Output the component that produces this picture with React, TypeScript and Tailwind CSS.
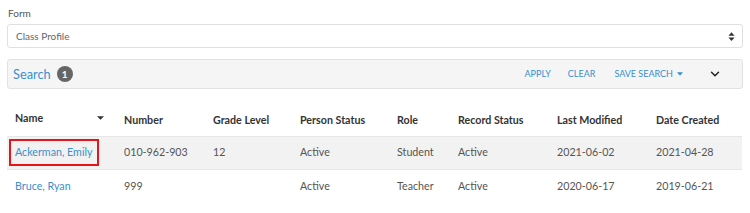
import { ChevronDown } from 'lucide-react';

const rows = [
  {
    name: 'Ackerman, Emily',
    number: '010-962-903',
    grade: '12',
    person: 'Active',
    role: 'Student',
    record: 'Active',
    modified: '2021-06-02',
    created: '2021-04-28',
  },
  {
    name: 'Bruce, Ryan',
    number: '999',
    grade: '',
    person: 'Active',
    role: 'Teacher',
    record: 'Active',
    modified: '2020-06-17',
    created: '2019-06-21',
  },
];

const cols = [
  { label: 'Name', w: 'w-[109px]' },
  { label: 'Number', w: 'w-[89px]' },
  { label: 'Grade Level', w: 'w-[87px]' },
  { label: 'Person Status', w: 'w-[97px]' },
  { label: 'Role', w: 'w-[61px]' },
  { label: 'Record Status', w: 'w-[99px]' },
  { label: 'Last Modified', w: 'w-[99px]' },
  { label: 'Date Created', w: 'w-[94px]' },
];

function SortArrows() {
  return (
    <svg width="7" height="11" viewBox="0 0 8 12" className="text-[#333]">
      <path d="M4 1 L7.5 5 H0.5 Z" fill="currentColor" />
      <path d="M4 11 L7.5 7 H0.5 Z" fill="currentColor" />
    </svg>
  );
}

export default function App() {
  return (
    <div className="w-[750px] h-[213px] overflow-hidden bg-white px-[7px] pt-[4px] font-['Lato',sans-serif] text-[10.7px] text-[#555]">
      <div className="pl-[1px] text-[10px] leading-[18px] text-[#555]">Form</div>
      <div className="mt-[2px] flex h-[24px] items-center justify-between rounded-[3px] border border-[#e0e0e0] bg-white pl-[8px] pr-[7px]">
        <span className="text-[10px] text-[#666]">Class Profile</span>
        <SortArrows />
      </div>

      <div className="mt-[11px] flex h-[30px] items-center rounded-[3px] border border-[#e2e2e2] bg-[#f5f5f5] pl-[5px] pr-[20px]">
        <span className="text-[12.8px] leading-none text-[#3a8fcc]">Search</span>
        <span className="ml-[6px] flex h-[16px] w-[16px] items-center justify-center rounded-full bg-[#666] text-[10px] font-bold leading-none text-white">
          1
        </span>
        <div className="ml-auto flex items-center text-[9px] text-[#3a8fcc]">
          <span>APPLY</span>
          <span className="ml-[17px]">CLEAR</span>
          <span className="ml-[19px] flex items-center">
            SAVE SEARCH
            <svg width="6" height="4" viewBox="0 0 7 4" className="ml-[4px]">
              <path d="M0 0 H7 L3.5 4 Z" fill="currentColor" />
            </svg>
          </span>
          <ChevronDown size={14} strokeWidth={2.5} className="ml-[25px] text-[#222]" />
        </div>
      </div>

      <table className="mt-[16px] w-[735px] table-fixed border-collapse whitespace-nowrap">
        <thead>
          <tr className="h-[31px]">
            {cols.map((c, i) => (
              <th key={c.label} className={`${c.w} px-[8px] text-left align-middle text-[10.7px] font-bold text-[#333]`}>
                {i === 0 ? (
                  <span className="-mt-[5px] flex items-center justify-between pr-[4px]">
                    {c.label}
                    <svg width="7" height="4" viewBox="0 0 8 4">
                      <path d="M0 0 H8 L4 4 Z" fill="#333" />
                    </svg>
                  </span>
                ) : (
                  c.label
                )}
              </th>
            ))}
          </tr>
        </thead>
        <tbody>
          {rows.map((r, i) => (
            <tr key={r.name} className={`h-[33px] border-t border-[#e6e6e6] ${i === 0 ? 'bg-[#f2f2f2]' : 'bg-white'}`}>
              <td className="px-[2px]">
                <span
                  className={`inline-block px-[4px] py-[3px] text-[#3a8fcc] ${
                    i === 0 ? 'border-2 border-[#e8141c]' : 'border-2 border-transparent'
                  }`}
                >
                  {r.name}
                </span>
              </td>
              <td className="px-[8px]">{r.number}</td>
              <td className="px-[8px]">{r.grade}</td>
              <td className="px-[8px]">{r.person}</td>
              <td className="px-[8px]">{r.role}</td>
              <td className="px-[8px]">{r.record}</td>
              <td className="px-[8px]">{r.modified}</td>
              <td className="px-[8px]">{r.created}</td>
            </tr>
          ))}
        </tbody>
      </table>
    </div>
  );
}
